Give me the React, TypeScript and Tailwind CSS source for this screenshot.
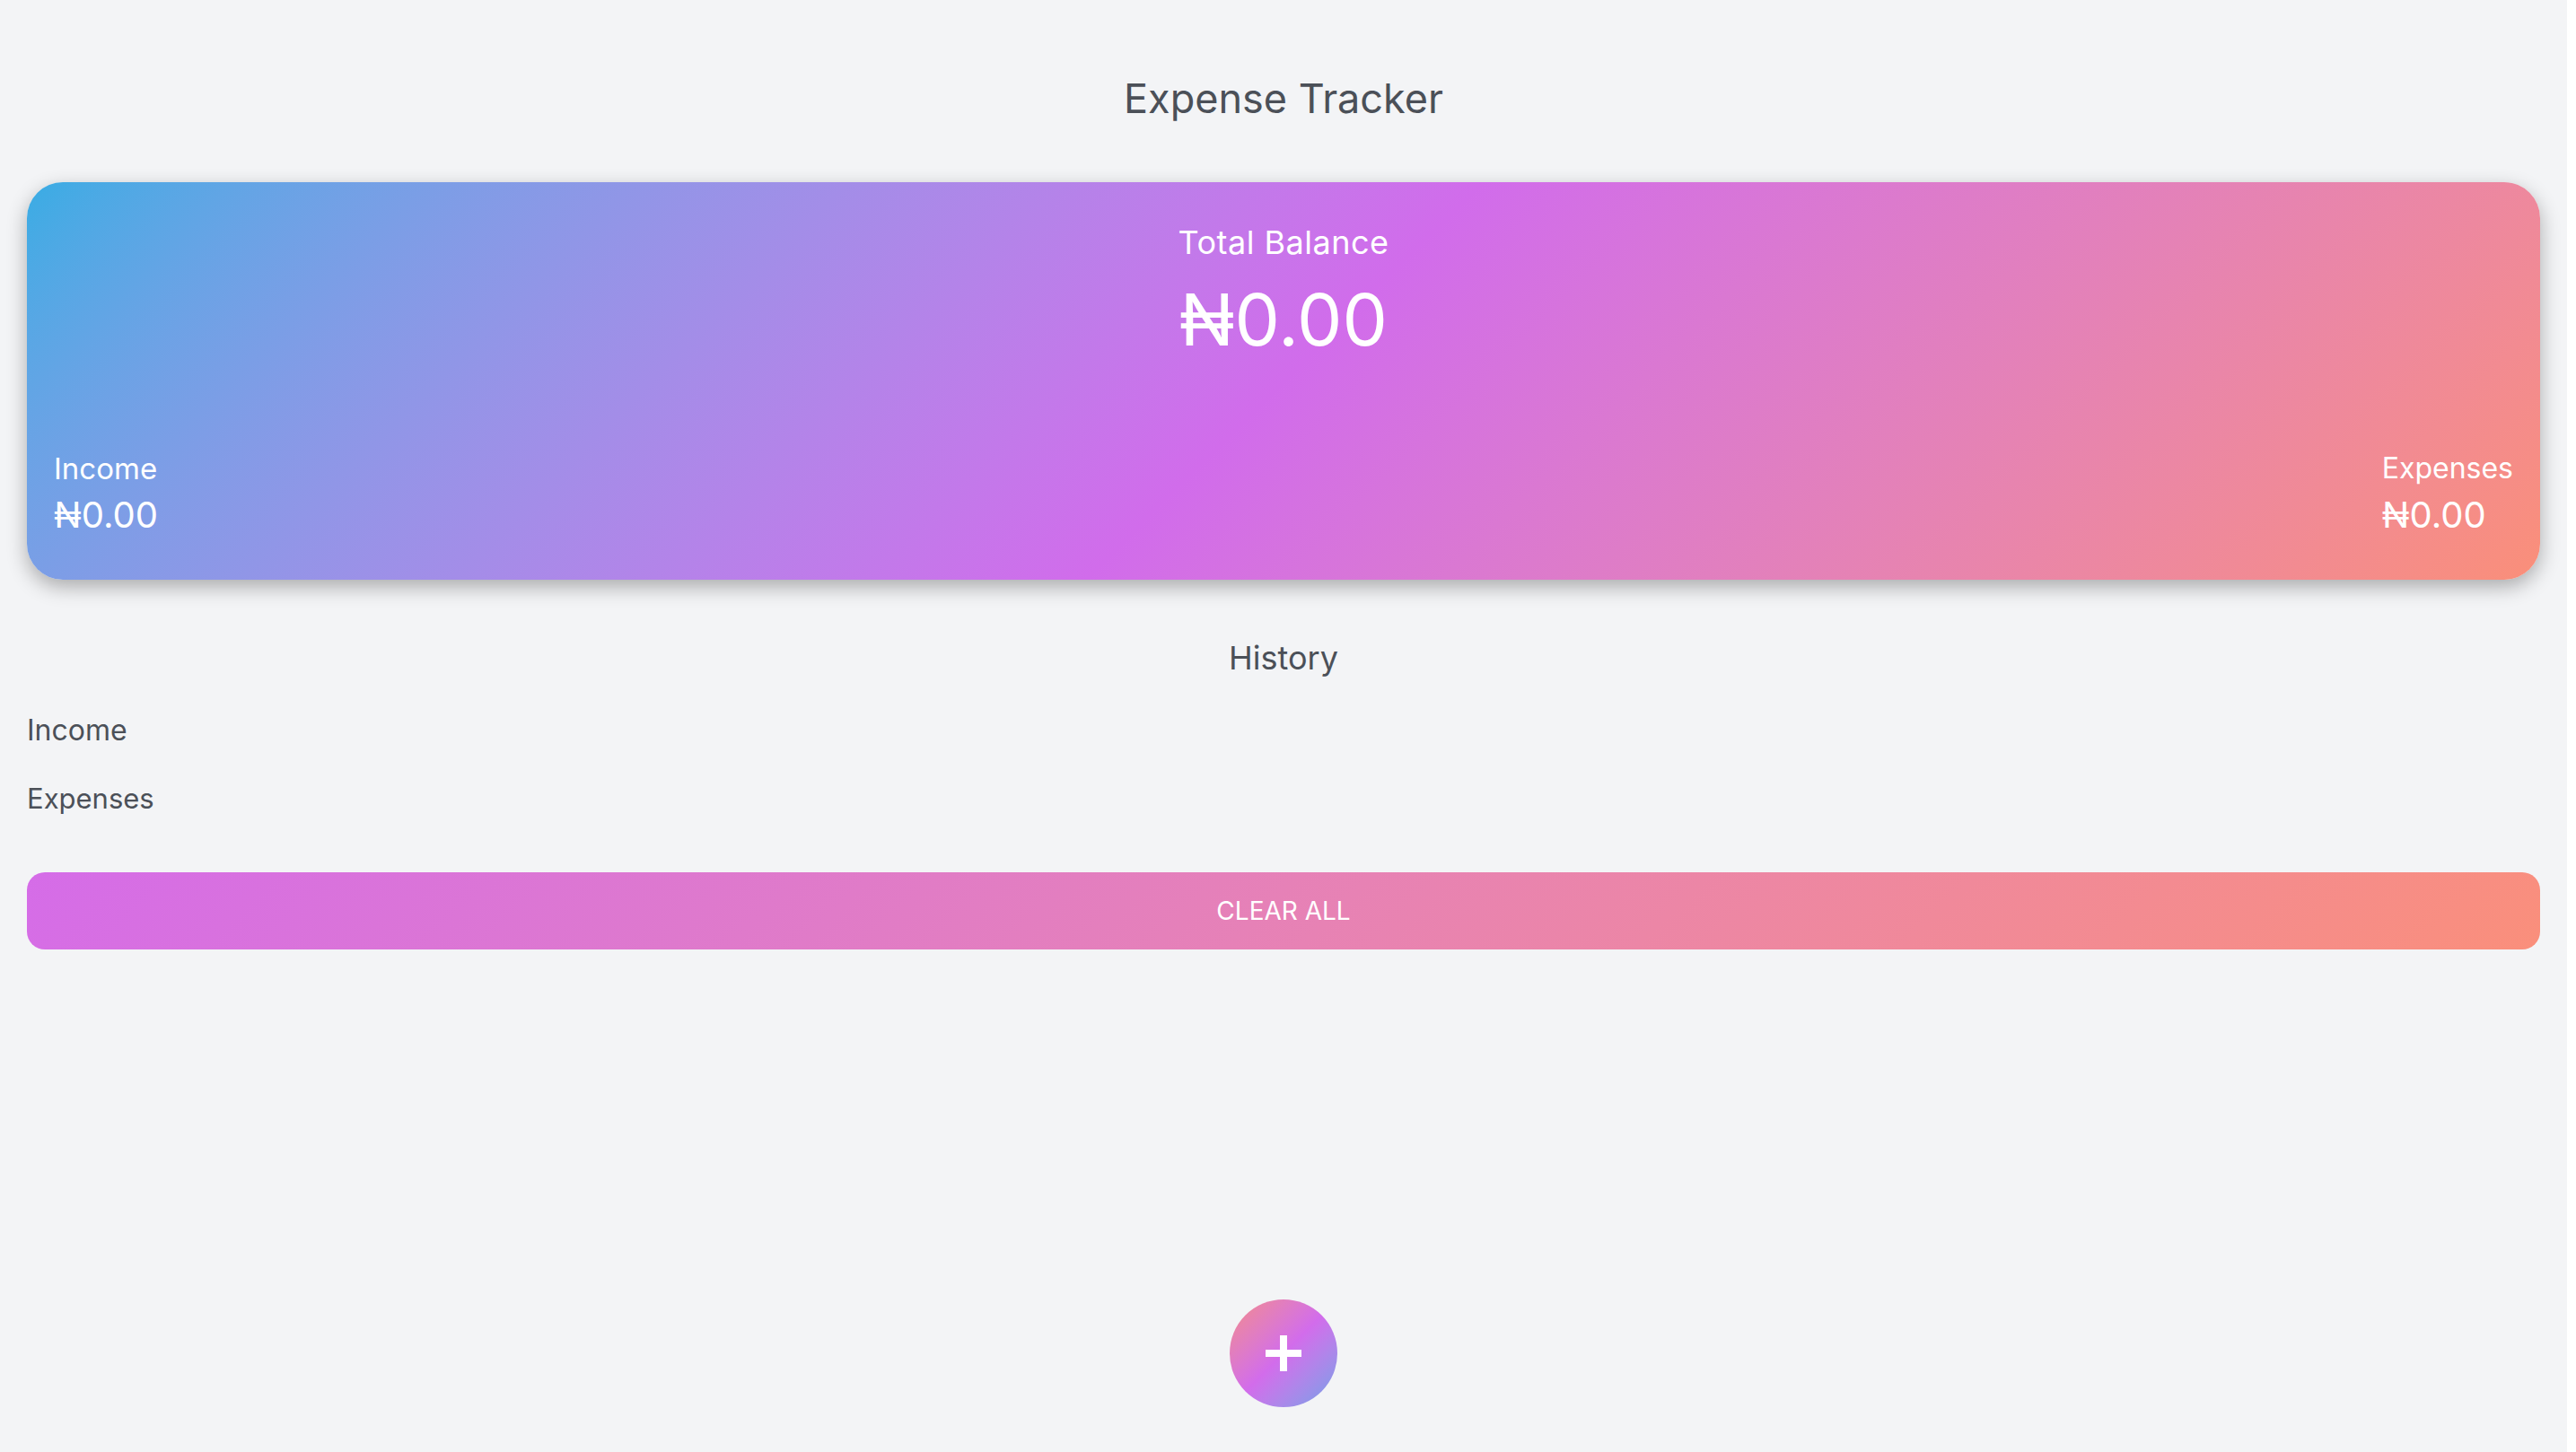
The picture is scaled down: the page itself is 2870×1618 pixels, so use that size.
export default function App() {
  const income = 0;
  const expenses = 0;
  const balance = income - expenses;

  const fmt = (n: number) => `₦${n.toFixed(2)}`;

  return (
    <div className="min-h-screen w-[2860px] bg-[#f3f4f6] px-[30px] flex flex-col font-['Inter','Open_Sans',sans-serif] text-[#4b5058]">
      <h1 className="mt-[87px] text-center text-[45px] leading-none font-normal">Expense Tracker</h1>

      {/* balance card */}
      <div className="mt-[71px] rounded-[40px] bg-linear-135 from-[#38ace4] via-[#d16ceb] to-[#fa8f79] pt-[49px] pb-[52px] px-[30px] text-white shadow-[0_8px_22px_rgba(0,0,0,0.3)]">
        <div className="flex flex-col items-center">
          <div className="text-[36px] leading-none tracking-[0.5px]">Total Balance</div>
          <div className="mt-[28px] text-[80px] leading-none">{fmt(balance)}</div>
        </div>
        <div className="mt-[110px] flex justify-between">
          <div className="flex flex-col">
            <div className="text-[33px] leading-none">Income</div>
            <div className="mt-[15px] text-[40px] leading-none">{fmt(income)}</div>
          </div>
          <div className="flex flex-col">
            <div className="text-[32px] leading-none">Expenses</div>
            <div className="mt-[16px] text-[40px] leading-none">{fmt(expenses)}</div>
          </div>
        </div>
      </div>

      <h2 className="mt-[69px] text-center text-[36px] leading-none">History</h2>
      <div className="mt-[47px] text-[32px] leading-none">Income</div>
      <div className="mt-[44px] text-[31px] leading-none">Expenses</div>

      <button className="mt-[67px] h-[86px] w-full rounded-[20px] bg-linear-135 from-[#d56ce8] to-[#fa8f7b] text-white text-[28px]">
        CLEAR ALL
      </button>

      <div className="mt-auto mb-[50px] flex justify-center">
        <button className="w-[120px] h-[120px] rounded-full bg-linear-135 from-[#f58a86] via-[#d26ceb] to-[#6aa0e8] flex items-center justify-center">
          <svg width="40" height="40" viewBox="0 0 40 40">
            <rect x="0" y="16" width="40" height="8" fill="white" />
            <rect x="16" y="0" width="8" height="40" fill="white" />
          </svg>
        </button>
      </div>
    </div>
  );
}
